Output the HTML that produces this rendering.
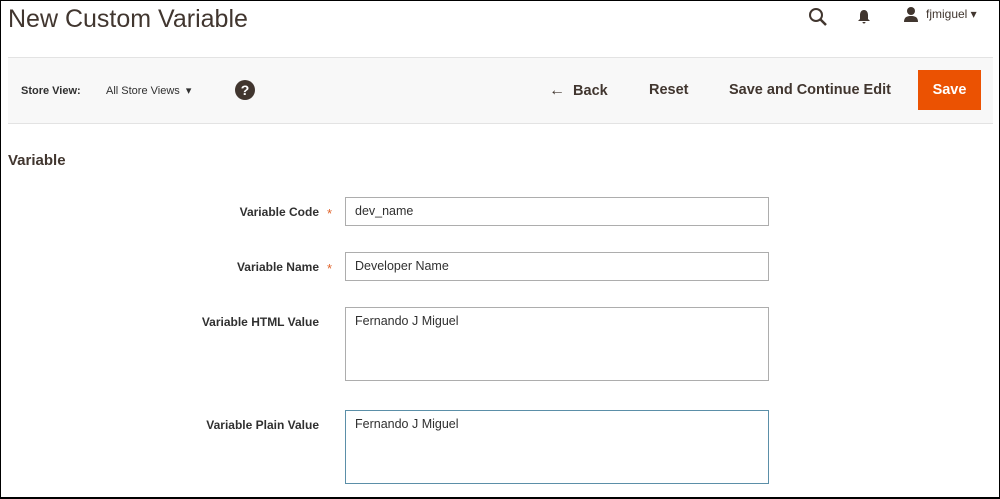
<!DOCTYPE html><html><head><style>
*{box-sizing:border-box;margin:0;padding:0}
body{width:1000px;height:499px;overflow:hidden;background:#fff;font-family:"Liberation Sans",sans-serif;color:#333;position:relative}
.frame{position:absolute;left:0;top:0;width:1000px;height:499px;border:1px solid #000;border-bottom-width:2px;pointer-events:none}
.a{position:absolute;white-space:nowrap}
.bar{position:absolute;left:8px;top:57px;width:985px;height:67px;background:#f8f8f8;border-top:1px solid #e3e3e3;border-bottom:1px solid #e3e3e3}
.lbl{position:absolute;right:681px;font-size:12px;font-weight:bold;color:#303030}
.inp{position:absolute;left:345px;width:424px;border:1px solid #adadad;background:#fff;font-size:12.5px;padding:6px 9px;color:#303030}
.star{position:absolute;left:327px;color:#e0632a;font-size:13px}
</style></head><body>
<div class="a" style="left:8px;top:5px;font-size:25px;color:#41362f">New Custom Variable</div>
<svg class="a" style="left:808px;top:7px" width="20" height="20" viewBox="0 0 20 20"><circle cx="8" cy="8" r="6" fill="none" stroke="#41362f" stroke-width="2"/><path d="M12.5 12.5L18 18" stroke="#41362f" stroke-width="2.5"/></svg>
<svg class="a" style="left:857px;top:9px" width="14" height="15" viewBox="0 0 14 15"><path d="M7 1C4 1 3 4 3 6v4L1 12h12l-2-2V6c0-2-1-5-4-5z M5.5 13a1.5 1.5 0 003 0z" fill="#41362f"/></svg>
<svg class="a" style="left:903px;top:6px" width="16" height="16" viewBox="0 0 16 16"><circle cx="8" cy="5" r="4" fill="#41362f"/><path d="M1 16c0-5 3-6 7-6s7 1 7 6z" fill="#41362f"/></svg>
<div class="a" style="left:926px;top:7px;font-size:12px;color:#41362f">fjmiguel ▾</div>
<div class="bar"></div>
<div class="a" style="left:21px;top:85px;font-size:11px;font-weight:bold;color:#303030">Store View:</div>
<div class="a" style="left:106px;top:84px;font-size:11px;color:#303030">All Store Views&nbsp;&nbsp;▾</div>
<div class="a" style="left:235px;top:80px;width:20px;height:20px;border-radius:50%;background:#41362f;color:#fff;font-weight:bold;font-size:14px;text-align:center;line-height:20px">?</div>
<div class="a" style="left:549px;top:82px;font-size:14.5px;font-weight:bold;color:#41362f"><span style="font-size:16px;font-weight:normal">←</span>&nbsp; Back</div>
<div class="a" style="left:649px;top:82px;font-size:14.5px;font-weight:bold;color:#41362f">Reset</div>
<div class="a" style="left:729px;top:82px;font-size:14.5px;font-weight:bold;color:#41362f">Save and Continue Edit</div>
<div class="a" style="left:918px;top:70px;width:63px;height:40px;background:#eb5202;color:#fff;font-size:14.5px;font-weight:bold;text-align:center;line-height:40px">Save</div>
<div class="a" style="left:8px;top:152px;font-size:15px;font-weight:bold;color:#41362f">Variable</div>
<div class="lbl" style="top:205px">Variable Code</div><div class="star" style="top:206px">*</div>
<div class="inp" style="top:197px;height:29px">dev_name</div>
<div class="lbl" style="top:260px">Variable Name</div><div class="star" style="top:261px">*</div>
<div class="inp" style="top:252px;height:29px">Developer Name</div>
<div class="lbl" style="top:315px">Variable HTML Value</div>
<div class="inp" style="top:307px;height:74px">Fernando J Miguel</div>
<div class="lbl" style="top:418px">Variable Plain Value</div>
<div class="inp" style="top:410px;height:74px;border-color:#5b8fa8">Fernando J Miguel</div>
<div class="frame"></div>
</body></html>
